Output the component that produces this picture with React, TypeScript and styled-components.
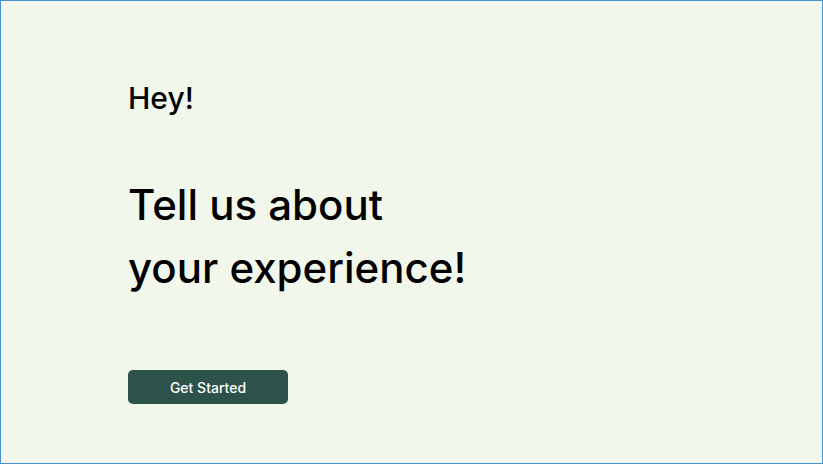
import React from 'react';
import styled, { createGlobalStyle } from 'styled-components';

const GlobalStyle = createGlobalStyle`
  html, body {
    margin: 0;
    padding: 0;
    height: 100%;
  }
  body {
    font-family: "Inter", "Noto Sans", sans-serif;
    background: #f1f7ea;
  }
  #root {
    height: 100%;
  }
`;

const Frame = styled.div`
  box-sizing: border-box;
  height: 100vh;
  border: 1px solid #4a90d9;
  background: #f1f7ea;
  padding: 75px 0 0 127px;
  display: flex;
  flex-direction: column;
  align-items: flex-start;
`;

const Greeting = styled.h2`
  margin: 0;
  font-size: 30px;
  font-weight: 500;
  color: #000;
  line-height: 44px;
`;

const Headline = styled.h1`
  margin: 53px 0 0;
  font-size: 42px;
  font-weight: 500;
  line-height: 63px;
  color: #000;
`;

const StartButton = styled.button`
  margin-top: 71px;
  width: 160px;
  height: 34px;
  border: none;
  border-radius: 5px;
  background: #2d5249;
  color: #fff;
  font-family: inherit;
  font-size: 14px;
  font-weight: 500;
  cursor: pointer;
`;

export default function App() {
  return (
    <>
      <GlobalStyle />
      <Frame>
        <Greeting>Hey!</Greeting>
        <Headline>
          Tell us about
          <br />
          your experience!
        </Headline>
        <StartButton>Get Started</StartButton>
      </Frame>
    </>
  );
}
